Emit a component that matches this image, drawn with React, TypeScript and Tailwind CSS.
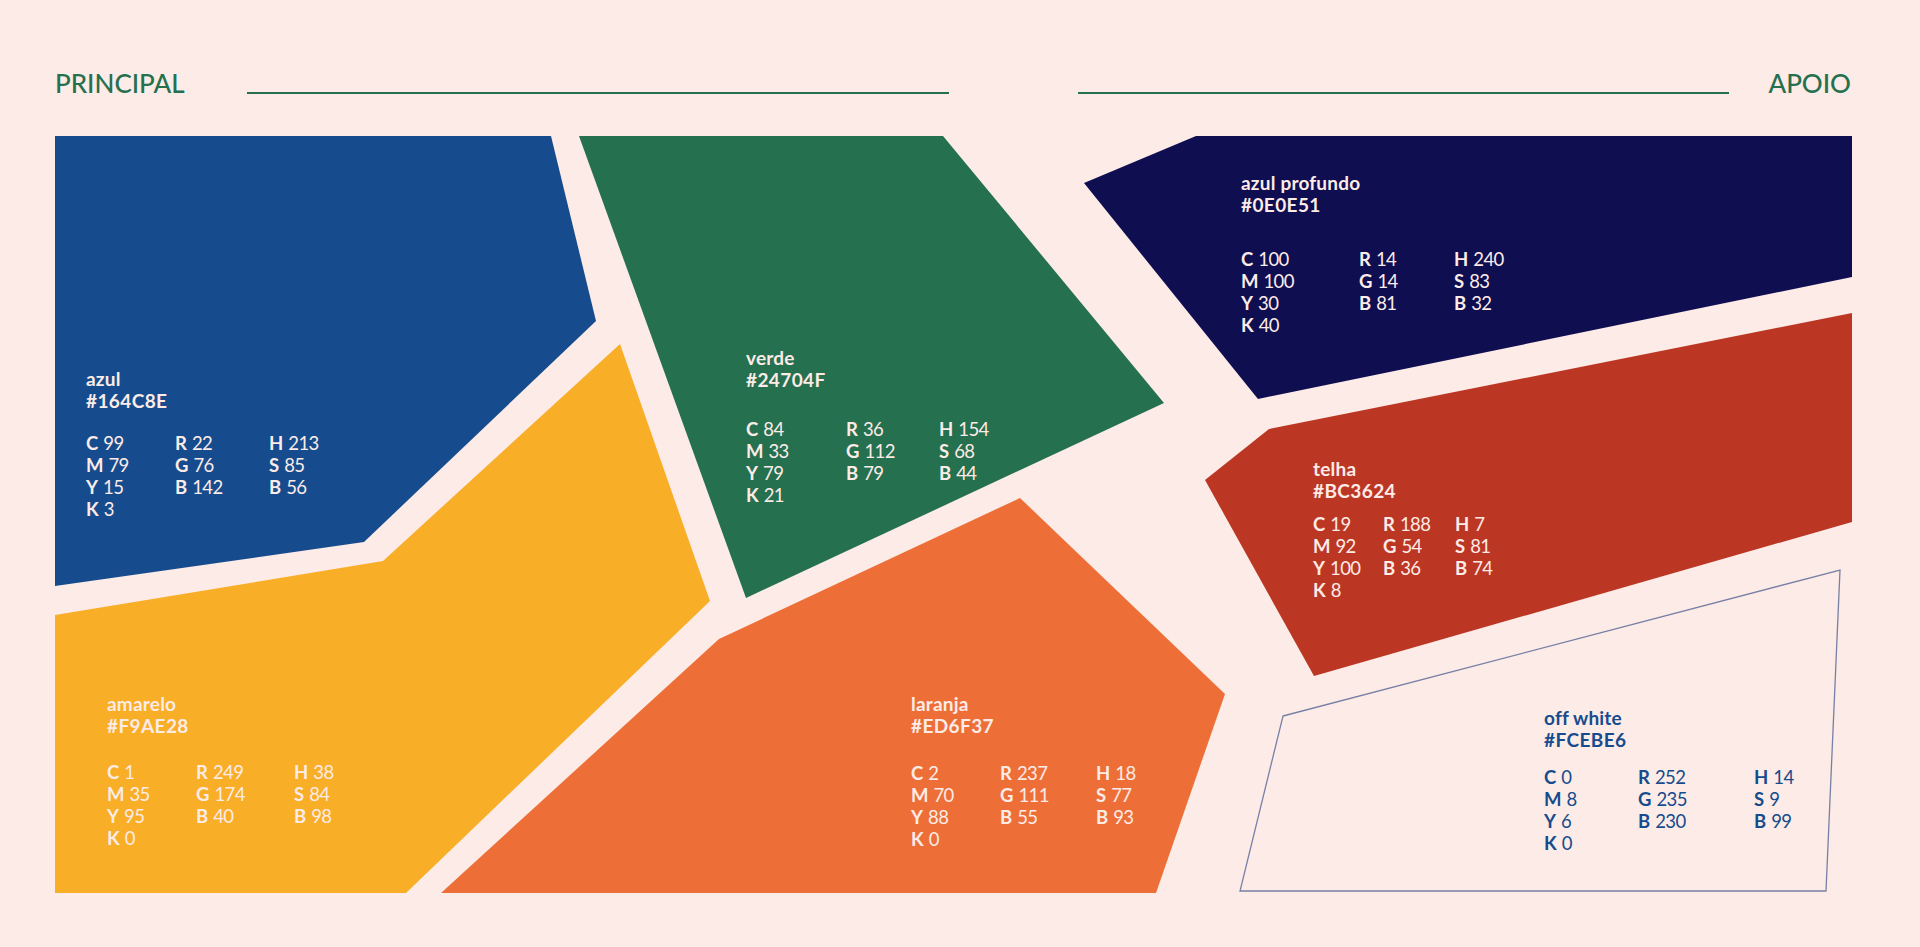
import React from "react";

type Block = {
  name: string;
  hex: string;
  cmyk: [string, string][];
  rgb: [string, string][];
  hsb: [string, string][];
  pos: string;
  gap: string;
  c1: string;
  c2: string;
  color: string;
};

const blocks: Block[] = [
  {
    name: "azul",
    hex: "#164C8E",
    cmyk: [["C", "99"], ["M", "79"], ["Y", "15"], ["K", "3"]],
    rgb: [["R", "22"], ["G", "76"], ["B", "142"]],
    hsb: [["H", "213"], ["S", "85"], ["B", "56"]],
    pos: "left-[86px] top-[232px]",
    gap: "mt-[20px]",
    c1: "w-[89px]",
    c2: "w-[94px]",
    color: "text-[#FCEBE6]",
  },
  {
    name: "verde",
    hex: "#24704F",
    cmyk: [["C", "84"], ["M", "33"], ["Y", "79"], ["K", "21"]],
    rgb: [["R", "36"], ["G", "112"], ["B", "79"]],
    hsb: [["H", "154"], ["S", "68"], ["B", "44"]],
    pos: "left-[746px] top-[211px]",
    gap: "mt-[27px]",
    c1: "w-[100px]",
    c2: "w-[93px]",
    color: "text-[#FCEBE6]",
  },
  {
    name: "azul profundo",
    hex: "#0E0E51",
    cmyk: [["C", "100"], ["M", "100"], ["Y", "30"], ["K", "40"]],
    rgb: [["R", "14"], ["G", "14"], ["B", "81"]],
    hsb: [["H", "240"], ["S", "83"], ["B", "32"]],
    pos: "left-[1241px] top-[36px]",
    gap: "mt-[32px]",
    c1: "w-[118px]",
    c2: "w-[95px]",
    color: "text-[#FCEBE6]",
  },
  {
    name: "telha",
    hex: "#BC3624",
    cmyk: [["C", "19"], ["M", "92"], ["Y", "100"], ["K", "8"]],
    rgb: [["R", "188"], ["G", "54"], ["B", "36"]],
    hsb: [["H", "7"], ["S", "81"], ["B", "74"]],
    pos: "left-[1313px] top-[322px]",
    gap: "mt-[11px]",
    c1: "w-[70px]",
    c2: "w-[72px]",
    color: "text-[#FCEBE6]",
  },
  {
    name: "amarelo",
    hex: "#F9AE28",
    cmyk: [["C", "1"], ["M", "35"], ["Y", "95"], ["K", "0"]],
    rgb: [["R", "249"], ["G", "174"], ["B", "40"]],
    hsb: [["H", "38"], ["S", "84"], ["B", "98"]],
    pos: "left-[107px] top-[557px]",
    gap: "mt-[24px]",
    c1: "w-[89px]",
    c2: "w-[98px]",
    color: "text-[#FCEBE6]",
  },
  {
    name: "laranja",
    hex: "#ED6F37",
    cmyk: [["C", "2"], ["M", "70"], ["Y", "88"], ["K", "0"]],
    rgb: [["R", "237"], ["G", "111"], ["B", "55"]],
    hsb: [["H", "18"], ["S", "77"], ["B", "93"]],
    pos: "left-[911px] top-[557px]",
    gap: "mt-[25px]",
    c1: "w-[89px]",
    c2: "w-[96px]",
    color: "text-[#FCEBE6]",
  },
  {
    name: "off white",
    hex: "#FCEBE6",
    cmyk: [["C", "0"], ["M", "8"], ["Y", "6"], ["K", "0"]],
    rgb: [["R", "252"], ["G", "235"], ["B", "230"]],
    hsb: [["H", "14"], ["S", "9"], ["B", "99"]],
    pos: "left-[1544px] top-[571px]",
    gap: "mt-[15px]",
    c1: "w-[94px]",
    c2: "w-[116px]",
    color: "text-[#164C8E]",
  },
];

function Col({ items, w }: { items: [string, string][]; w?: string }) {
  return (
    <div className={`${w ?? ""} shrink-0 flex flex-col`}>
      {items.map(([k, v], i) => (
        <div key={i} className="h-[22px] leading-[22px] text-[18.5px] whitespace-nowrap">
          <span className="font-bold">{k}</span>
          <span className="ml-[5px] font-normal tracking-[-0.6px]">{v}</span>
        </div>
      ))}
    </div>
  );
}

function Label({ b }: { b: Block }) {
  return (
    <div className={`absolute ${b.pos} ${b.color} flex flex-col`}>
      <div className="text-[19px] leading-[22px] font-bold tracking-[0.2px] whitespace-nowrap">{b.name}</div>
      <div className="text-[19px] leading-[22px] font-bold tracking-[0.4px] whitespace-nowrap">{b.hex}</div>
      <div className={`${b.gap} flex`}>
        <Col items={b.cmyk} w={b.c1} />
        <Col items={b.rgb} w={b.c2} />
        <Col items={b.hsb} />
      </div>
    </div>
  );
}

export default function App() {
  return (
    <div className="w-[1920px] h-[947px] bg-[#FCEBE6] font-[Lato,sans-serif] overflow-hidden flex flex-col">
      <header className="h-[136px] shrink-0 flex items-start pt-[67px] pl-[55px] pr-[69px] text-[#24704F]">
        <div className="w-[192px] shrink-0 text-[26px] leading-[32px] font-medium">PRINCIPAL</div>
        <div className="w-[702px] h-[2px] mt-[25px] bg-[#24704F] shrink-0" />
        <div className="w-[651px] h-[2px] mt-[25px] ml-[129px] bg-[#24704F] shrink-0" />
        <div className="flex-1 text-right text-[26px] leading-[32px] font-medium">APOIO</div>
      </header>
      <main className="relative flex-1">
        <svg
          className="absolute inset-0"
          width="1920"
          height="811"
          viewBox="0 136 1920 811"
          xmlns="http://www.w3.org/2000/svg"
        >
          <polygon points="55,136 551,136 596,321 364,542 55,586" fill="#164C8E" />
          <polygon points="579,136 943,136 1164,403 746,598" fill="#24704F" />
          <polygon points="620,344 710,601 406,893 55,893 55,615 383,561" fill="#F9AE28" />
          <polygon points="1020,498 1225,694 1156,893 441,893 719,639" fill="#ED6F37" />
          <polygon points="1196,136 1852,136 1852,277 1258,399 1084,183" fill="#0E0E51" />
          <polygon points="1269,429 1852,313 1852,522 1314,676 1205,480" fill="#BC3624" />
          <polygon
            points="1283,716 1840,570 1826,891 1240,891"
            fill="none"
            stroke="#7880A6"
            strokeWidth="1.3"
          />
        </svg>
        {blocks.map((b) => (
          <Label key={b.name} b={b} />
        ))}
      </main>
    </div>
  );
}
